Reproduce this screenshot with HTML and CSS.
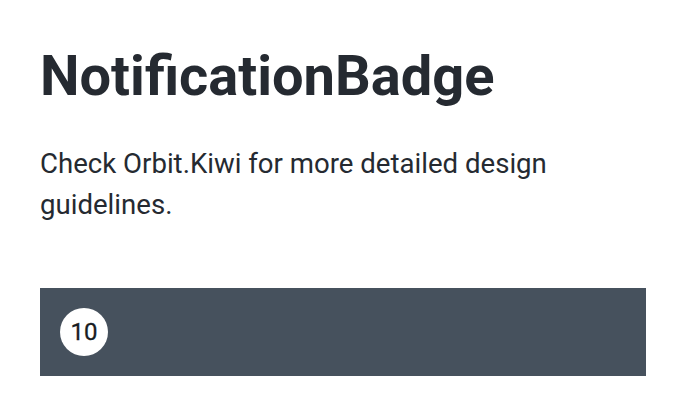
FILE: index.html
```html
<!DOCTYPE html>
<html>
<head>
<meta charset="utf-8">
<link rel="stylesheet" href="styles.css">
</head>
<body>
<main class="page">
  <h1 class="title">NotificationBadge</h1>
  <p class="lead">Check Orbit.Kiwi for more detailed design guidelines.</p>
  <div class="panel">
    <span class="badge">10</span>
  </div>
</main>
</body>
</html>
```
FILE: styles.css
```css
html, body {
  margin: 0;
  padding: 0;
  background: #ffffff;
}
.page {
  padding: 40px;
  font-family: Roboto, "Liberation Sans", sans-serif;
  color: #252a31;
}
.title {
  margin: 0;
  font-size: 56px;
  line-height: 72px;
  font-weight: 700;
}
.lead {
  margin: 31px 0 0 0;
  font-size: 27.6px;
  line-height: 41px;
  font-weight: 400;
  max-width: 560px;
}
.panel {
  margin-top: 63px;
  width: 606px;
  height: 88px;
  box-sizing: border-box;
  padding: 20px;
  background: #46515d;
  display: flex;
  align-items: center;
}
.badge {
  width: 48px;
  height: 48px;
  border-radius: 50%;
  background: #ffffff;
  color: #181c22;
  display: flex;
  align-items: center;
  justify-content: center;
  font-size: 24px;
  font-weight: 400;
  -webkit-text-stroke: 0.3px #181c22;
}
```
